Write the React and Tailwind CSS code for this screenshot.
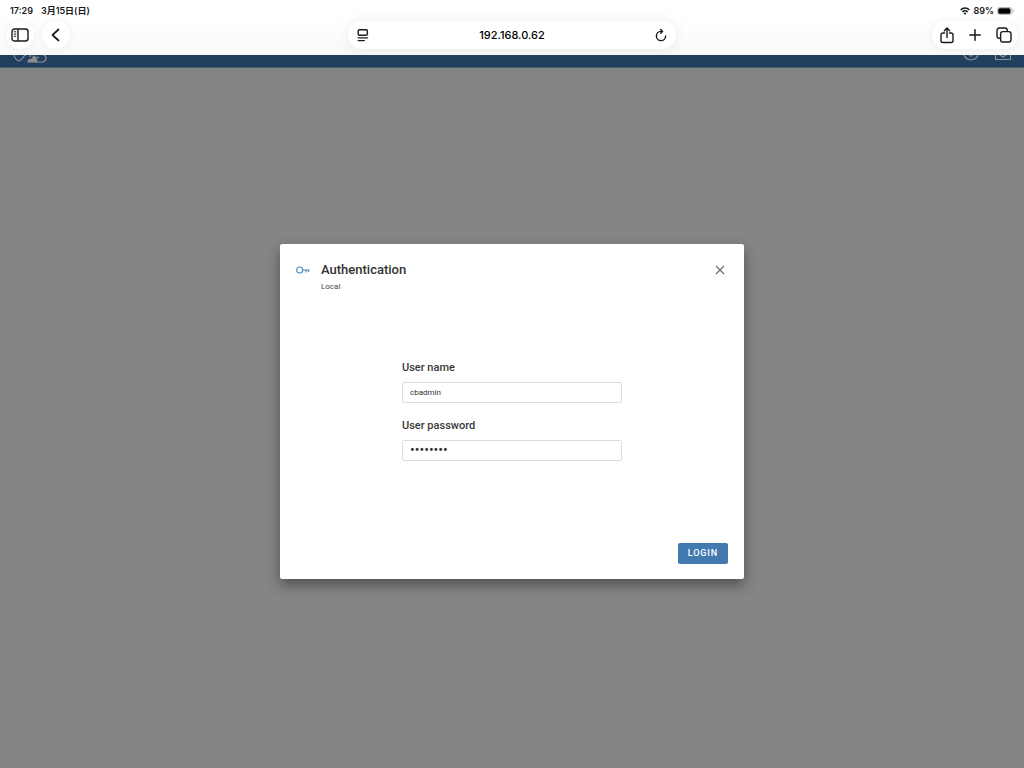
import { useState } from 'react'

function SidebarIcon() {
  return (
    <svg width="18" height="14" viewBox="0 0 18 14" fill="none" stroke="currentColor" strokeWidth="1.4">
      <rect x="1" y="1" width="16" height="12" rx="2.5" />
      <path d="M7 1v12" />
      <path d="M3.2 3.8h1.600M3.200 6h1.600M3.200 8.200h1.600" strokeWidth="1" strokeLinecap="round" />
    </svg>
  )
}

function BackIcon() {
  return (
    <svg width="14" height="14" viewBox="0 0 14 14" fill="none" stroke="currentColor" strokeWidth="1.7" strokeLinecap="round" strokeLinejoin="round">
      <path d="M9.5 1.5 3.5 7l6 5.5" />
    </svg>
  )
}

function ReaderIcon() {
  return (
    <svg width="12" height="14" viewBox="0 0 12 14" fill="none" stroke="currentColor" strokeLinecap="round">
      <rect x="1.2" y="1.7" width="9.2" height="5.6" rx="1.4" strokeWidth="1.4" />
      <path d="M1.2 9.8h9.4M1.2 12.6h6.2" strokeWidth="1.2" />
    </svg>
  )
}

function ReloadIcon() {
  return (
    <svg width="12" height="14" viewBox="0 0 12 14" fill="none" stroke="currentColor" strokeWidth="1.4" strokeLinecap="round" strokeLinejoin="round">
      <path d="M10.600 8A4.600 4.600 0 1 1 6 3.400h1.200" />
      <path d="M5.700 1.500 7.600 3.400 5.700 5.300" />
    </svg>
  )
}

function ShareIcon() {
  return (
    <svg width="14" height="17" viewBox="0 0 14 17" fill="none" stroke="currentColor" strokeWidth="1.4" strokeLinecap="round" strokeLinejoin="round">
      <path d="M4.5 6H3a2 2 0 0 0-2 2v5.500a2 2 0 0 0 2 2h8a2 2 0 0 0 2-2V8a2 2 0 0 0-2-2H9.500" />
      <path d="M7 10.500V1.200M4.300 3.700 7 1.100l2.700 2.600" />
    </svg>
  )
}

function PlusIcon() {
  return (
    <svg width="12" height="12" viewBox="0 0 12 12" fill="none" stroke="currentColor" strokeWidth="1.5" strokeLinecap="round">
      <path d="M6 .8v10.400M.8 6h10.400" />
    </svg>
  )
}

function TabsIcon() {
  return (
    <svg width="16" height="16" viewBox="0 0 16 16" fill="none" stroke="currentColor" strokeWidth="1.4">
      <path d="M4.600 11.200H3.200A2.200 2.200 0 0 1 1 9V3.200A2.200 2.200 0 0 1 3.200 1H9a2.200 2.200 0 0 1 2.200 2.200v1.400" />
      <rect x="4.600" y="4.600" width="10.400" height="10.400" rx="2.200" />
    </svg>
  )
}

function WifiIcon() {
  return (
    <svg width="10" height="8" viewBox="0 0 10 8" fill="none" stroke="currentColor" strokeWidth="1.400">
      <path d="M.6 2.900a6.200 6.200 0 0 1 8.800 0" />
      <path d="M2.300 4.900a3.800 3.800 0 0 1 5.400 0" />
      <path d="M5 7.800 3.500 6.300a2.100 2.100 0 0 1 3 0z" fill="currentColor" stroke="none" />
    </svg>
  )
}

function BatteryIcon() {
  return (
    <svg width="17" height="8" viewBox="0 0 17 8">
      <rect x=".5" y=".5" width="14.500" height="7" rx="2.200" fill="none" stroke="#a3a3a3" strokeWidth=".8" />
      <rect x="1.300" y="1.200" width="12.200" height="5.600" rx="1.500" fill="#000" />
      <path d="M15.800 2.700v2.600q1-.4 1-1.300t-1-1.300z" fill="#a3a3a3" />
    </svg>
  )
}

function KeyIcon() {
  return (
    <svg width="14" height="8" viewBox="0 0 14 8" fill="none" stroke="currentColor" strokeWidth="1.100">
      <circle cx="3.700" cy="4" r="3" />
      <path d="M6.700 4h7M10 4v2.400M12.300 4v2" />
    </svg>
  )
}

function CloseIcon() {
  return (
    <svg width="10" height="10" viewBox="0 0 10 10" fill="none" stroke="currentColor" strokeWidth="1.100">
      <path d="m1 1 8 8M9 1 1 9" />
    </svg>
  )
}

function BrowserBar() {
  return (
    <header className="h-[55px] bg-gradient-to-b from-white from-30% to-[#f9f9f9] text-[#1a1a1a]">
      <div className="flex h-[21px] items-center justify-between px-2.5 text-[9px] font-semibold text-[#1a1a1a]">
        <div className="flex gap-2">
          <span>17:29</span>
          <span>3月15日(日)</span>
        </div>
        <div className="flex items-center gap-[3px]">
          <WifiIcon />
          <span>89%</span>
          <BatteryIcon />
        </div>
      </div>
      <div className="grid grid-cols-[1fr_328px_1fr] items-center px-1.5">
        <div className="flex gap-2">
          <button aria-label="Sidebar" className="flex size-7 items-center justify-center rounded-full bg-white shadow-[0_0_10px_rgba(0,0,0,0.06)]">
            <SidebarIcon />
          </button>
          <button aria-label="Back" className="flex size-7 items-center justify-center rounded-full bg-white shadow-[0_0_10px_rgba(0,0,0,0.06)]">
            <BackIcon />
          </button>
        </div>
        <div className="flex h-7 items-center rounded-full bg-white px-[9px] shadow-[0_0_14px_rgba(0,0,0,0.07)]">
          <button aria-label="Page settings"><ReaderIcon /></button>
          <input
            aria-label="Address"
            defaultValue="192.168.0.62"
            className="min-w-0 flex-1 text-center text-[11px] font-medium text-black outline-none"
          />
          <button aria-label="Reload"><ReloadIcon /></button>
        </div>
        <div className="flex h-7 items-center gap-[15px] justify-self-end rounded-full bg-white pr-1.5 pl-2 shadow-[0_0_10px_rgba(0,0,0,0.06)]">
          <button aria-label="Share"><ShareIcon /></button>
          <button aria-label="New tab"><PlusIcon /></button>
          <button aria-label="Tabs"><TabsIcon /></button>
        </div>
      </div>
    </header>
  )
}

// Lower edge of the application's own toolbar, scrolled under the browser bar
function AppToolbar() {
  return (
    <div className="flex h-[13px] items-start justify-between border-b border-[#4b5b6b] bg-[#21405f] px-3 text-[#8b8f94]">
      <svg width="36" height="9" viewBox="0 0 36 9" fill="none" stroke="currentColor" strokeWidth="1.200">
        <path d="M2 0q1 5 5 6 3-1 5-5l2-1" />
        <path d="M16 7q0-3 4-3l2-3 3 4-1 2z" fill="currentColor" />
        <path d="M19 0q-2 1 0 2M24 3q1-2 3 0M23 7h8q3-1 3-4t-3-3" />
      </svg>
      <svg width="50" height="6" viewBox="0 0 50 6" fill="none" stroke="currentColor" strokeWidth="1.200">
        <path d="M2 0q2 4.800 7 4.800T16 0M6.500 0h5M9 0v2" />
        <path d="M33.500 0v4.500h15V0M38 0l3 2 3-2" />
      </svg>
    </div>
  )
}

function Field({ id, label, type, value, onChange }) {
  return (
    <div>
      <label htmlFor={id} className="block text-[11px] leading-4 font-medium text-[#383838]">{label}</label>
      <input
        id={id}
        type={type}
        value={value}
        onChange={(e) => onChange(e.target.value)}
        className={`mt-1.5 block h-[21px] w-full rounded-[2px] border border-[#dcdcdc] bg-white px-[7px] text-[#333] outline-none ${type === 'password' ? 'text-[14px]' : 'text-[8px]'}`}
      />
    </div>
  )
}

function LoginDialog() {
  const [user, setUser] = useState('cbadmin')
  const [password, setPassword] = useState('password')

  return (
    <form
      role="dialog"
      aria-labelledby="auth-title"
      onSubmit={(e) => e.preventDefault()}
      className="flex w-[464px] max-w-full flex-col rounded-[2px] bg-white px-4 pt-[18px] pb-[15px] font-[Roboto,sans-serif] shadow-[0_6px_14px_rgba(0,0,0,0.4)]"
    >
      <div className="flex items-start">
        <span className="flex h-4 w-[25px] items-center text-[#4a8bc8]"><KeyIcon /></span>
        <div className="flex-1">
          <h1 id="auth-title" className="text-[13px] leading-4 font-medium text-[#333]">Authentication</h1>
          <p className="text-[8px] leading-[18px] text-[#444]">Local</p>
        </div>
        <button type="button" aria-label="Close" className="flex h-4 w-4 items-center justify-center text-[#6b6b6b]">
          <CloseIcon />
        </button>
      </div>
      <div className="mx-auto mt-16 w-[220px] space-y-[15px]">
        <Field id="user" label="User name" type="text" value={user} onChange={setUser} />
        <Field id="password" label="User password" type="password" value={password} onChange={setPassword} />
      </div>
      <button type="submit" className="mt-[82px] h-[21px] self-end rounded-[2px] bg-[#4179b0] px-2.5 text-[9px] font-medium tracking-widest text-white">
        LOGIN
      </button>
    </form>
  )
}

export default function App() {
  return (
    <div className="flex min-h-screen flex-col bg-[#858585] font-[Inter,'Noto_Sans_CJK_JP',sans-serif]">
      <BrowserBar />
      <AppToolbar />
      <main className="flex flex-1 items-center justify-center pb-[13px]">
        <LoginDialog />
      </main>
    </div>
  )
}
